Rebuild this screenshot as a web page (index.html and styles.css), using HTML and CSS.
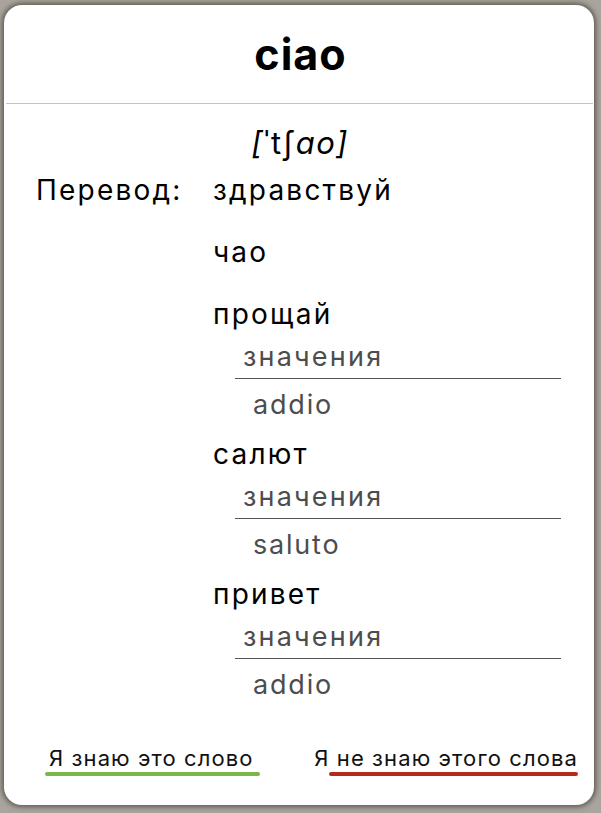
FILE: index.html
```html
<!DOCTYPE html>
<html lang="ru">
<head>
<meta charset="utf-8">
<title>ciao</title>
<link rel="stylesheet" href="styles.css">
</head>
<body>
<div class="card">
  <header class="title-bar">
    <h1 class="word">ciao</h1>
  </header>
  <div class="transcription">[<span class="ipa">ˈtʃ</span>ao]</div>
  <section class="translation">
    <div class="label">Перевод:</div>
    <div class="values">
      <div class="item">
        <div class="tr">здравствуй</div>
      </div>
      <div class="item">
        <div class="tr">чао</div>
      </div>
      <div class="item has-meaning">
        <div class="tr">прощай</div>
        <div class="meaning">
          <div class="meaning-head">значения</div>
          <div class="meaning-ex">addio</div>
        </div>
      </div>
      <div class="item has-meaning">
        <div class="tr">салют</div>
        <div class="meaning">
          <div class="meaning-head">значения</div>
          <div class="meaning-ex">saluto</div>
        </div>
      </div>
      <div class="item has-meaning">
        <div class="tr">привет</div>
        <div class="meaning">
          <div class="meaning-head">значения</div>
          <div class="meaning-ex">addio</div>
        </div>
      </div>
    </div>
  </section>
  <footer class="actions">
    <button class="btn btn-know">Я знаю это слово</button>
    <button class="btn btn-dont">Я не знаю этого слова</button>
  </footer>
</div>
</body>
</html>
```

FILE: styles.css
```css
* { box-sizing: border-box; }
html, body { margin: 0; padding: 0; }
body {
  width: 601px;
  height: 813px;
  background: #a9a59e;
  font-family: Inter, "Liberation Sans", Arial, sans-serif;
  overflow: hidden;
}
.card {
  margin: 5px 7px 0 4px;
  height: 800px;
  background: #ffffff;
  border-radius: 18px;
  box-shadow: 0 0 5px 2px rgba(70, 64, 56, 0.75);
  display: flex;
  flex-direction: column;
  color: #000;
}
.title-bar {
  height: 99px;
  margin: 0 1px 0 2px;
  border-bottom: 1px solid #c4c4c4;
  display: flex;
  justify-content: center;
}
.word {
  margin: 0;
  padding-top: 24px;
  font-size: 43px;
  line-height: 50px;
  font-weight: 700;
  letter-spacing: 1px;
  padding-left: 2px;
}
.transcription {
  text-align: center;
  font-style: italic;
  font-size: 31px;
  line-height: 36px;
  margin-top: 21px;
  letter-spacing: 1.5px;
  padding-left: 2px;
}
.ipa { font-style: normal; }
.translation {
  display: grid;
  grid-template-columns: 209px 1fr;
  margin-top: 11px;
}
.label {
  padding-left: 32px;
  font-size: 28px;
  line-height: 36px;
  letter-spacing: 2.2px;
}
.values {
  display: flex;
  flex-direction: column;
  gap: 26px;
}
.item.has-meaning + .item { margin-top: -12px; }
.tr {
  font-size: 28px;
  line-height: 36px;
  letter-spacing: 2.2px;
}
.meaning {
  margin-top: 7px;
  margin-left: 22px;
  width: 326px;
  color: #4d4d4d;
}
.meaning-head {
  padding-left: 8px;
  font-size: 27px;
  line-height: 36px;
  letter-spacing: 2.2px;
  padding-bottom: 3px;
  border-bottom: 1px solid #555;
}
.meaning-ex {
  margin-top: 8px;
  padding-left: 18px;
  font-size: 27px;
  line-height: 36px;
  letter-spacing: 1.8px;
}
.item.has-meaning + .item { margin-top: -13px; }
.actions {
  margin-top: auto;
  margin-bottom: 29px;
  display: flex;
  justify-content: space-between;
  padding: 0 16px 0 45px;
}
.btn {
  border: 0;
  background: none;
  padding: 0 0 4px;
  font-family: inherit;
  font-size: 22px;
  line-height: 28px;
  letter-spacing: 1.1px;
  color: #111;
  position: relative;
}
.btn::after {
  content: "";
  position: absolute;
  bottom: 0;
  height: 4px;
  border-radius: 2px;
}
.btn-know::after { left: -4px; right: -6px; background: #7ab648; }
.btn-dont::after { left: 15px; right: 0; background: #b52a1d; }
```
